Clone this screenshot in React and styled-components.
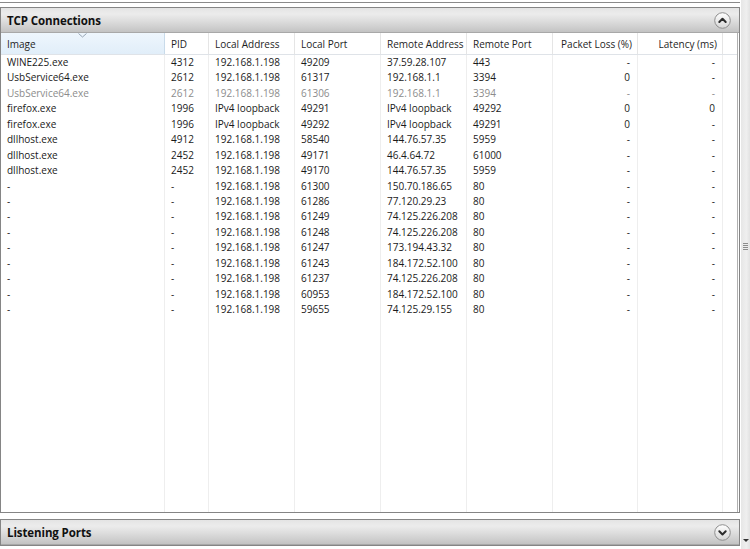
import React from 'react';
import styled, { createGlobalStyle } from 'styled-components';

const GlobalStyle = createGlobalStyle`
  html, body {
    margin: 0;
    padding: 0;
    background: #fff;
  }
  body {
    font-family: 'Open Sans', 'Liberation Sans', sans-serif;
    width: 750px;
    height: 549px;
    overflow: hidden;
  }
`;

const columns = [
  { key: 'image', label: 'Image', width: 164 },
  { key: 'pid', label: 'PID', width: 44 },
  { key: 'localAddr', label: 'Local Address', width: 86 },
  { key: 'localPort', label: 'Local Port', width: 86 },
  { key: 'remoteAddr', label: 'Remote Address', width: 86 },
  { key: 'remotePort', label: 'Remote Port', width: 86 },
  { key: 'loss', label: 'Packet Loss (%)', width: 85, right: true },
  { key: 'latency', label: 'Latency (ms)', width: 85, right: true },
];

const lan = '192.168.1.198';

const rows = [
  ['WINE225.exe', '4312', lan, '49209', '37.59.28.107', '443', '-', '-'],
  ['UsbService64.exe', '2612', lan, '61317', '192.168.1.1', '3394', '0', '-'],
  ['UsbService64.exe', '2612', lan, '61306', '192.168.1.1', '3394', '-', '-', true],
  ['firefox.exe', '1996', 'IPv4 loopback', '49291', 'IPv4 loopback', '49292', '0', '0'],
  ['firefox.exe', '1996', 'IPv4 loopback', '49292', 'IPv4 loopback', '49291', '0', '-'],
  ['dllhost.exe', '4912', lan, '58540', '144.76.57.35', '5959', '-', '-'],
  ['dllhost.exe', '2452', lan, '49171', '46.4.64.72', '61000', '-', '-'],
  ['dllhost.exe', '2452', lan, '49170', '144.76.57.35', '5959', '-', '-'],
  ['-', '-', lan, '61300', '150.70.186.65', '80', '-', '-'],
  ['-', '-', lan, '61286', '77.120.29.23', '80', '-', '-'],
  ['-', '-', lan, '61249', '74.125.226.208', '80', '-', '-'],
  ['-', '-', lan, '61248', '74.125.226.208', '80', '-', '-'],
  ['-', '-', lan, '61247', '173.194.43.32', '80', '-', '-'],
  ['-', '-', lan, '61243', '184.172.52.100', '80', '-', '-'],
  ['-', '-', lan, '61237', '74.125.226.208', '80', '-', '-'],
  ['-', '-', lan, '60953', '184.172.52.100', '80', '-', '-'],
  ['-', '-', lan, '59655', '74.125.29.155', '80', '-', '-'],
];

const Page = styled.div`
  display: flex;
  width: 750px;
  height: 549px;
`;

const Content = styled.div`
  width: 740px;
  display: flex;
  flex-direction: column;
`;

const PrevPanelEdge = styled.div`
  height: 2px;
  border-bottom: 1px solid #8a8a8a;
  margin-bottom: 4px;
`;

const Panel = styled.section`
  display: flex;
  flex-direction: column;
  border: 1px solid #858585;
  height: ${(p) => p.height || 'auto'};
  margin-bottom: ${(p) => p.gap || 0};
`;

const PanelHeader = styled.div`
  height: 24px;
  display: flex;
  align-items: center;
  justify-content: space-between;
  padding: 0 8px 0 6px;
  background: linear-gradient(to bottom, #e4e4e4 0%, #ececec 25%, #dadada 60%, #c3c3c3 100%);
  border-bottom: 1px solid #a8a8a8;
`;

const PanelTitle = styled.span`
  font-size: 11.5px;
  font-weight: 700;
  color: #111;
  letter-spacing: -0.1px;
`;

const Toggle = styled.span`
  width: 17px;
  height: 17px;
  display: flex;
`;

const Table = styled.div`
  flex: 1;
  display: flex;
  flex-direction: column;
  position: relative;
  border-right: 1px solid #b0b0b0;
  margin-right: 1px;
`;

const HeadRow = styled.div`
  display: flex;
  height: 21px;
  border-bottom: 1px solid #dfe3e8;
`;

const HeadCell = styled.div`
  position: relative;
  width: ${(p) => p.w}px;
  flex: none;
  display: flex;
  align-items: center;
  justify-content: ${(p) => (p.right ? 'flex-end' : 'flex-start')};
  padding: 0 ${(p) => (p.right ? '5px' : '6px')};
  box-sizing: border-box;
  font-size: 10px;
  white-space: nowrap;
  color: #1e1e1e;
  border-right: 1px solid ${(p) => (p.sorted ? '#c9dbea' : '#e5e5e5')};
  background: ${(p) => (p.sorted ? 'linear-gradient(to bottom, #eef6fd, #e1eef9)' : '#fff')};
`;

const SortMark = styled.svg`
  position: absolute;
  top: 0;
  left: 77px;
`;

const Body = styled.div`
  flex: 1;
  position: relative;
  display: flex;
  flex-direction: column;
`;

const Guides = styled.div`
  position: absolute;
  inset: 0;
  display: flex;
  pointer-events: none;
`;

const Guide = styled.div`
  width: ${(p) => p.w}px;
  flex: none;
  box-sizing: border-box;
  border-right: 1px solid #eeeeee;
`;

const Row = styled.div`
  display: flex;
  height: 15.45px;
  position: relative;
  color: ${(p) => (p.muted ? '#8c8c8c' : '#1a1a1a')};
`;

const Cell = styled.div`
  width: ${(p) => p.w}px;
  flex: none;
  box-sizing: border-box;
  padding: 0 ${(p) => (p.right ? '7px' : '6px')};
  font-size: 10px;
  line-height: 15.45px;
  white-space: nowrap;
  text-align: ${(p) => (p.right ? 'right' : 'left')};
  border-right: 1px solid transparent;
`;

const Scrollbar = styled.div`
  width: 9px;
  margin-left: 1px;
  display: flex;
  flex-direction: column;
  align-items: center;
  background: linear-gradient(to right, #e6e6e6, #efefef 60%, #e2e2e2);
`;

const Grip = styled.div`
  margin-top: 243px;
  width: 5px;
  height: 7px;
  background: repeating-linear-gradient(to bottom, #8c8c8c 0 1px, transparent 1px 2px);
`;

const Arrow = styled.div`
  margin-top: auto;
  margin-bottom: 7px;
  width: 0;
  height: 0;
  border-left: 3px solid transparent;
  border-right: 3px solid transparent;
  border-top: 3px solid #333;
`;

function ToggleIcon({ up }) {
  return (
    <Toggle>
      <svg width="17" height="17" viewBox="0 0 17 17">
        <defs>
          <linearGradient id={up ? 'tgU' : 'tgD'} x1="0" y1="0" x2="0" y2="1">
            <stop offset="0" stopColor="#ffffff" />
            <stop offset="1" stopColor="#d6d6d6" />
          </linearGradient>
        </defs>
        <circle cx="8.5" cy="8.5" r="7.8" fill={`url(#${up ? 'tgU' : 'tgD'})`} stroke="#8e8e8e" strokeWidth="1" />
        <path
          d={up ? 'M5.3 10 L8.5 6.8 L11.7 10' : 'M5.3 7.3 L8.5 10.5 L11.7 7.3'}
          fill="none"
          stroke="#2b2b2b"
          strokeWidth="2"
          strokeLinecap="round"
          strokeLinejoin="round"
        />
      </svg>
    </Toggle>
  );
}

export default function App() {
  return (
    <>
      <GlobalStyle />
      <Page>
        <Content>
          <PrevPanelEdge />
          <Panel height="504px" gap="6px">
            <PanelHeader>
              <PanelTitle>TCP Connections</PanelTitle>
              <ToggleIcon up />
            </PanelHeader>
            <Table>
              <HeadRow>
                {columns.map((c, i) => (
                  <HeadCell key={c.key} w={c.width} right={c.right} sorted={i === 0}>
                    {c.label}
                    {i === 0 && (
                      <SortMark width="9" height="5" viewBox="0 0 9 5">
                        <path d="M0.5 0.5 L4.5 4 L8.5 0.5" fill="none" stroke="#97a5b5" strokeWidth="1" />
                      </SortMark>
                    )}
                  </HeadCell>
                ))}
              </HeadRow>
              <Body>
                <Guides>
                  {columns.map((c) => (
                    <Guide key={c.key} w={c.width} />
                  ))}
                </Guides>
                {rows.map((r, ri) => (
                  <Row key={ri} muted={r[8]}>
                    {columns.map((c, ci) => (
                      <Cell key={c.key} w={c.width} right={c.right}>
                        {r[ci]}
                      </Cell>
                    ))}
                  </Row>
                ))}
              </Body>
            </Table>
          </Panel>
          <Panel>
            <PanelHeader>
              <PanelTitle>Listening Ports</PanelTitle>
              <ToggleIcon />
            </PanelHeader>
          </Panel>
        </Content>
        <Scrollbar>
          <Grip />
          <Arrow />
        </Scrollbar>
      </Page>
    </>
  );
}
